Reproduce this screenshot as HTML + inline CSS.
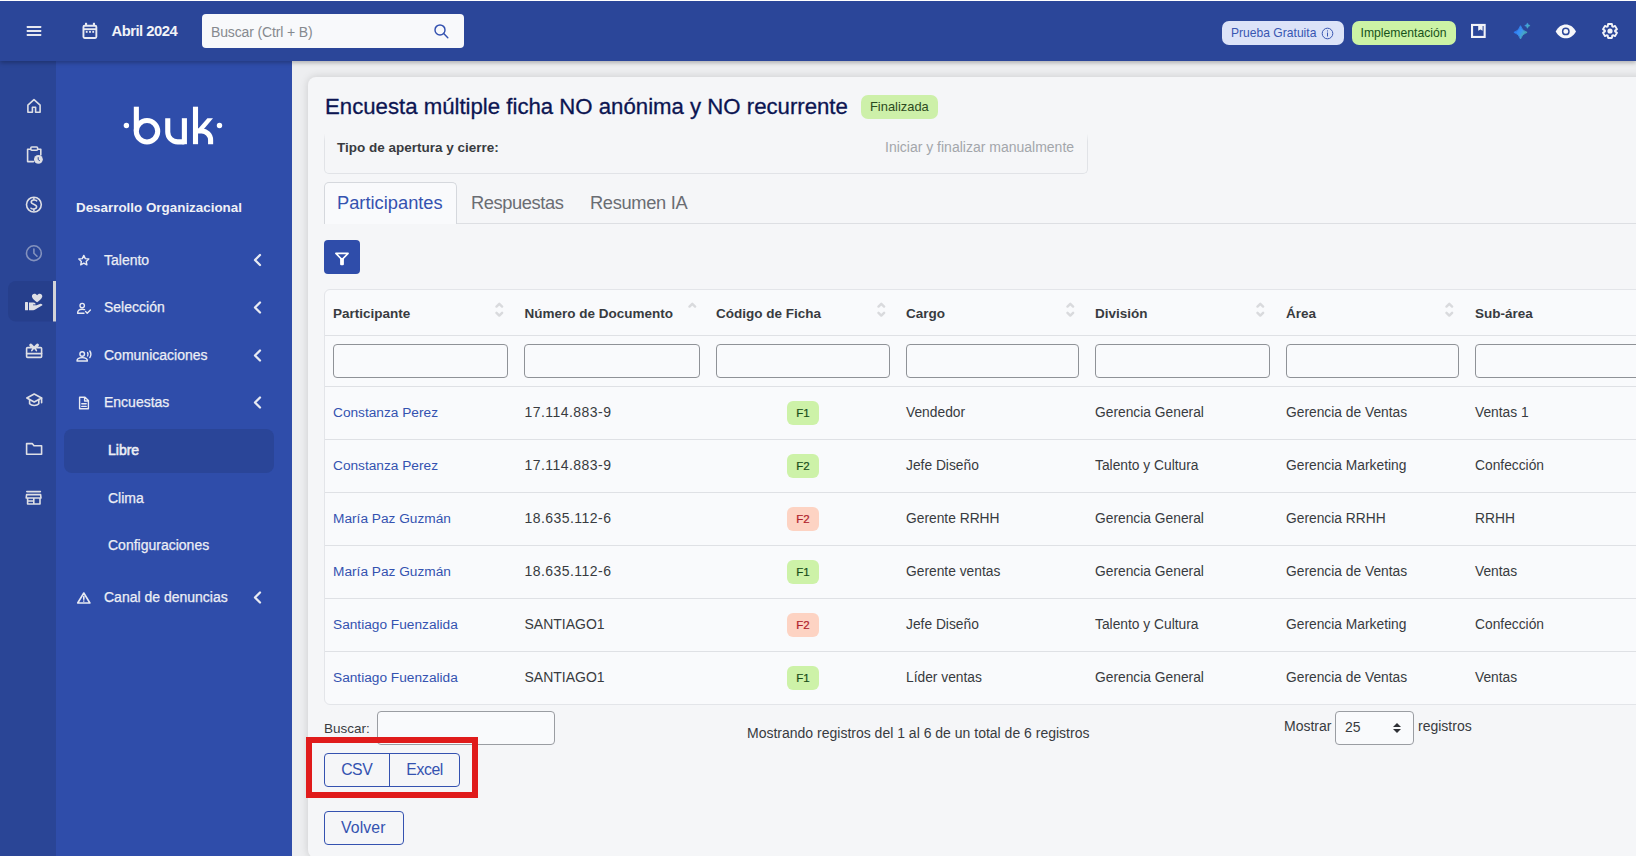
<!DOCTYPE html>
<html lang="es">
<head>
<meta charset="utf-8">
<title>Buk</title>
<style>
*{box-sizing:border-box;margin:0;padding:0}
html,body{width:1636px;height:856px;overflow:hidden;background:#EDEEF0;font-family:"Liberation Sans",sans-serif;color:#333}
.abs{position:absolute}
#top{position:absolute;left:0;top:0;width:1636px;height:61px;background:#2B4699;border-top:1px solid #FFFFFF;box-shadow:0 2px 4px rgba(0,0,0,.25);z-index:5}
#rail{position:absolute;left:0;top:61px;width:56px;height:795px;background:#2A4596}
#side{position:absolute;left:56px;top:61px;width:236px;height:795px;background:#2F4DAA}
#card{position:absolute;left:308px;top:77px;width:1360px;height:781px;background:#F5F6F8;border-radius:8px;box-shadow:0 0 8px rgba(0,0,0,.15)}
.txt{position:absolute;white-space:nowrap;line-height:1}
.ico{position:absolute}
.nav{position:absolute;left:104px;color:#ECEEF5;font-size:14px;white-space:nowrap;line-height:1;-webkit-text-stroke:0.25px #ECEEF5}
.sub{position:absolute;left:108px;color:#ECEEF5;font-size:14px;white-space:nowrap;line-height:1;-webkit-text-stroke:0.25px #ECEEF5}
.chev{position:absolute;left:252px}
.th{position:absolute;top:306px;font-size:14px;font-weight:bold;color:#333;white-space:nowrap;line-height:1}
.fin{position:absolute;top:344px;height:34px;border:1px solid #8F9297;border-radius:4px;background:#F9FAFC}
.rl{position:absolute;left:325px;width:1311px;height:1px;background:#DFE1E5}
.cell{position:absolute;font-size:14px;color:#333;white-space:nowrap;line-height:1}
.lnk{color:#3452B0}
.bdg{position:absolute;left:787px;width:32px;height:24px;border-radius:6px;font-size:11.5px;line-height:24px;text-align:center;-webkit-text-stroke:0.2px currentColor}
.g{background:#CDF2A8;color:#184D18}
.r{background:#FDD3C3;color:#B0222C}
</style>
</head>
<body>
<div id="top">
  <!-- hamburger -->
  <svg class="ico" style="left:26px;top:24px" width="16" height="12" viewBox="0 0 16 12"><g fill="#E6E8F0"><rect x="0.7" y="1.1" width="14.6" height="1.8" rx="0.4"/><rect x="0.7" y="5.1" width="14.6" height="1.8" rx="0.4"/><rect x="0.7" y="9.1" width="14.6" height="1.8" rx="0.4"/></g></svg>
  <!-- calendar -->
  <svg class="ico" style="left:76px;top:15px" width="28" height="28" viewBox="76 16 28 28"><g fill="none" stroke="#E8EAF2" stroke-width="1.9"><rect x="83.45" y="25.75" width="12.9" height="12.2" rx="1.2"/><line x1="83.45" y1="29.2" x2="96.35" y2="29.2"/></g><g fill="#E8EAF2"><rect x="85" y="22.8" width="2.1" height="3"/><rect x="92.9" y="22.8" width="2.1" height="3"/><rect x="85.8" y="30.9" width="1.8" height="1.9"/><rect x="89.1" y="30.9" width="1.8" height="1.9"/><rect x="92.3" y="30.9" width="1.8" height="1.9"/></g></svg>
  <div class="txt" style="left:111.5px;top:23.3px;font-size:14.8px;font-weight:bold;color:#F2F3F7;letter-spacing:-0.5px">Abril 2024</div>
  <div class="abs" style="left:202px;top:13px;width:262px;height:34px;background:#F8F9FB;border-radius:4px"></div>
  <div class="txt" style="left:211px;top:24.1px;font-size:14px;color:#86898E;letter-spacing:-0.14px">Buscar (Ctrl + B)</div>
  <svg class="ico" style="left:432.5px;top:22px" width="17" height="17" viewBox="0 0 17 17"><g fill="none" stroke="#3452B0" stroke-width="1.45" stroke-linecap="round"><circle cx="7" cy="6.9" r="5"/><line x1="10.7" y1="10.6" x2="14.8" y2="14.7"/></g></svg>
  <!-- pills -->
  <div class="abs" style="left:1222px;top:20px;width:122px;height:24px;background:#DCE3F8;border-radius:7px"></div>
  <div class="txt" style="left:1231px;top:25.9px;font-size:12.1px;color:#3856B1">Prueba Gratuita</div>
  <svg class="ico" style="left:1321px;top:26px" width="13" height="13" viewBox="0 0 13 13"><g fill="none" stroke="#3A57B2" stroke-width="1"><circle cx="6.5" cy="6.5" r="5.3"/></g><rect x="6" y="5.5" width="1" height="4" fill="#3A57B2"/><rect x="6" y="3.4" width="1" height="1.1" fill="#3A57B2"/></svg>
  <div class="abs" style="left:1352px;top:20px;width:104px;height:24px;background:#CCF3A5;border-radius:7px"></div>
  <div class="txt" style="left:1360.5px;top:25.9px;font-size:12.2px;color:#17521A">Implementación</div>
  <!-- book -->
  <svg class="ico" style="left:1466px;top:17px" width="26" height="26" viewBox="1466 18 26 26"><rect x="1472.05" y="24.95" width="12.6" height="12" fill="none" stroke="#F2F3F7" stroke-width="2.1"/><path d="M1478.2,25 H1482.6 V30.8 L1480.4,29.6 L1478.2,30.8 Z" fill="#F2F3F7"/></svg>
  <!-- sparkle -->
  <svg class="ico" style="left:1508px;top:17px" width="28" height="26" viewBox="1508 18 28 26"><defs><linearGradient id="sg" gradientUnits="userSpaceOnUse" x1="1514" y1="29" x2="1528" y2="37"><stop offset="0" stop-color="#2777FF"/><stop offset="0.45" stop-color="#3C93F0"/><stop offset="1" stop-color="#55C98A"/></linearGradient></defs><path d="M1520.5,25.7 Q1521.95,30.9 1527.1,32.35 Q1521.95,33.8 1520.5,39 Q1519.05,33.8 1513.9,32.35 Q1519.05,30.9 1520.5,25.7 Z" fill="url(#sg)" stroke="url(#sg)" stroke-width="0.8" stroke-linejoin="round"/><path d="M1527.4,22.9 Q1528,25 1530.1,25.6 Q1528,26.2 1527.4,28.3 Q1526.8,26.2 1524.7,25.6 Q1526.8,25 1527.4,22.9 Z" fill="url(#sg)" stroke="url(#sg)" stroke-width="0.5" stroke-linejoin="round"/></svg>
  <!-- eye -->
  <svg class="ico" style="left:1552px;top:17px" width="28" height="26" viewBox="1552 18 28 26"><path d="M1555.7,31.4 C1558.5,26.5 1562,24.5 1565.8,24.5 C1569.6,24.5 1573.1,26.5 1576,31.4 C1573.1,36.3 1569.6,38.25 1565.8,38.25 C1562,38.25 1558.5,36.3 1555.7,31.4 Z" fill="#F6F7FA"/><circle cx="1565.8" cy="31.4" r="3.18" fill="none" stroke="#2B4699" stroke-width="1.45"/></svg>
  <!-- gear -->
  <svg class="ico" style="left:1600.3px;top:20px" width="20" height="20" viewBox="0 0 20 20"><path fill="none" stroke="#F2F3F7" stroke-width="1.9" stroke-linejoin="round" d="M7.78,5.41 L8.08,3.06 L11.92,3.06 L12.22,5.41 L12.87,5.78 L15.05,4.87 L16.97,8.19 L15.09,9.62 L15.09,10.38 L16.97,11.81 L15.05,15.13 L12.87,14.22 L12.22,14.59 L11.92,16.94 L8.08,16.94 L7.78,14.59 L7.13,14.22 L4.95,15.13 L3.03,11.81 L4.91,10.38 L4.91,9.62 L3.03,8.19 L4.95,4.87 L7.13,5.78 Z"/><circle cx="10" cy="10" r="2.6" fill="#F2F3F7"/></svg>
</div>

<div id="rail">
  <svg class="ico" style="left:0;top:0" width="56" height="795" viewBox="0 61 56 795">
    <g fill="none" stroke="#DEDFE5" stroke-width="1.6" stroke-linejoin="round" stroke-linecap="round">
      <path d="M27.9,112.2 V105.2 L34,99.6 L40.1,105.2 V112.2 H35.6 V107.2 H32.4 V112.2 Z"/>
      <path d="M30.5,149.2 H27.6 V161.6 H33.5 M40.8,155 V149.2 H37.8"/>
      <rect x="30.8" y="147" width="6.8" height="3.2" rx="1"/>
      <circle cx="33.9" cy="204.6" r="7.4"/>
      <path d="M36.6,200.8 C35.6,199.6 31.2,199.6 31.2,202.2 C31.2,204.6 36.6,203.8 36.6,206.8 C36.6,209.4 32.2,209.4 31,208.2 M33.9,198.4 V199.8 M33.9,209.4 V210.8"/>
    </g>
    <circle cx="38.4" cy="159.3" r="4.4" fill="#DEDFE5"/>
    <path d="M38.2,157.2 V159.6 L39.8,160.8" fill="none" stroke="#2A4596" stroke-width="1"/>
    <g fill="none" stroke="#DEDFE5" stroke-opacity="0.5" stroke-width="1.6" stroke-linecap="round">
      <circle cx="33.9" cy="253.2" r="7.4"/>
      <path d="M33.9,249 V253.2 L37,256.2"/>
    </g>
    <path d="M8,289 a8,8 0 0 1 8,-8 H56 V321.5 H16 a8,8 0 0 1 -8,-8 Z" fill="#263F8C"/>
    <rect x="53" y="281" width="3" height="40.5" fill="#D3D4D9"/>
    <g fill="#DEDFE5">
      <path d="M37.1,302.3 C35,300.5 31.9,298.3 31.9,296.2 C31.9,294.6 33,293.7 34.4,293.7 C35.6,293.7 36.6,294.4 37.1,295.3 C37.6,294.4 38.6,293.7 39.8,293.7 C41.2,293.7 42.3,294.6 42.3,296.2 C42.3,298.3 39.2,300.5 37.1,302.3 Z"/>
      <rect x="25" y="302" width="3" height="8.3" rx="0.5"/>
      <path d="M29,302.6 H33.5 C34.8,302.6 35.6,303.4 35.6,304.4 H33 V305.2 H36.6 L40.5,303.8 C41.6,303.6 42.6,304.4 42.4,305.3 L35.2,309.6 C34.6,310 34,310.2 33.2,310.2 H29 Z"/>
    </g>
    <g fill="none" stroke="#DEDFE5" stroke-width="1.6" stroke-linejoin="round" stroke-linecap="round">
      <rect x="26.6" y="347.6" width="15" height="9.8" rx="1"/>
      <line x1="26.6" y1="353.6" x2="41.6" y2="353.6"/>
      <path d="M34.1,347.6 L31.3,344.6 C30.6,343.8 29.6,344.8 30.2,345.6 L32.4,347.6 M34.1,347.6 L36.9,344.6 C37.6,343.8 38.6,344.8 38,345.6 L35.8,347.6 M34.1,347.6 L31.8,350.6 M34.1,347.6 L36.4,350.6"/>
      <path d="M26.8,398 L34.2,394 L41.6,398 L34.2,402 Z"/>
      <path d="M29.6,399.6 V403.8 C31.6,406 36.8,406 38.8,403.8 V399.6 M41.6,398 V402.8"/>
      <path d="M26.6,454.2 V443.6 H32.2 L34,445.8 H41.6 V454.2 Z"/>
      <path d="M26.8,491.6 H40.4 M26.6,494.6 H40.6 L41,498 H26.2 Z M27.6,498 V504 H40 V498 M33.8,498 V504 M27.6,501 H33.8"/>
    </g>
  </svg>
</div>
<div id="side">
  <svg class="ico" style="left:0;top:0" width="236" height="795" viewBox="56 61 236 795">
    <g fill="#FFFFFF">
      <circle cx="126.4" cy="125.5" r="2.7"/>
      <circle cx="219.5" cy="125.5" r="2.7"/>
      <polygon points="207.4,118.2 213,118.2 201.6,131.8 195.6,131.8"/>
    </g>
    <g fill="none" stroke="#FFFFFF" stroke-width="5.1">
      <path d="M136.35,106.7 V131.2"/>
      <circle cx="147" cy="131.25" r="10.7"/>
      <path d="M167.75,118.2 V132 A9.85,9.85 0 0 0 177.6,141.85 H184.4"/>
      <path d="M184.4,118.2 V144.2"/>
      <path d="M195.5,106.7 V144.2"/>
      <path d="M195.5,131 H201.5 A9.1,9.1 0 0 1 210.6,140.1 V144.2"/>
    </g>
    <!-- nav icons -->
    <g fill="none" stroke="#E8EAF2" stroke-width="1.4" stroke-linejoin="round" stroke-linecap="round">
      <path d="M83.8,255.4 L85.3,258.6 L88.8,259 L86.2,261.4 L86.9,264.8 L83.8,263.1 L80.7,264.8 L81.4,261.4 L78.8,259 L82.3,258.6 Z"/>
      <circle cx="82.2" cy="305.6" r="2.2"/>
      <path d="M77.6,313.2 C77.6,310.4 79.6,309.2 82.2,309.2 C83.2,309.2 84,309.4 84.6,309.6 M77.6,313.2 H84 M85.6,311.6 L87.2,313.2 L90.4,310"/>
      <circle cx="82.2" cy="354" r="2.3"/>
      <path d="M77,361 C77,358.6 79,357.6 82.2,357.6 C85.4,357.6 87.4,358.6 87.4,361 Z M87.6,352.6 C88.2,353.6 88.2,355 87.6,356 M89.8,351 C91,352.8 91,355.8 89.8,357.6"/>
      <path d="M79.6,397.2 H85 L88.4,400.6 V408.8 H79.6 Z M84.6,397.4 V401 H88.2 M81.8,403.8 H86.2 M81.8,406.4 H86.2"/>
      <path d="M83.8,593 L89.9,603 H77.7 Z M83.8,596.6 V599.2 M83.8,601 V601.1" stroke-width="1.6"/>
    </g>
    <g fill="none" stroke="#E8EAF2" stroke-width="2.3" stroke-linecap="round" stroke-linejoin="round">
      <path d="M260,255 L255,260 L260,265"/>
      <path d="M260,302.5 L255,307.5 L260,312.5"/>
      <path d="M260,350.5 L255,355.5 L260,360.5"/>
      <path d="M260,397.5 L255,402.5 L260,407.5"/>
      <path d="M260,592.5 L255,597.5 L260,602.5"/>
    </g>
    <rect x="64" y="429" width="210" height="44" rx="8" fill="#2A4598"/>
  </svg>
  <div class="txt" style="left:20px;top:140px;font-size:13.4px;font-weight:bold;color:#EFF1F6">Desarrollo Organizacional</div>
  <div class="nav" style="left:48px;top:192px">Talento</div>
  <div class="nav" style="left:48px;top:239px">Selección</div>
  <div class="nav" style="left:48px;top:287px">Comunicaciones</div>
  <div class="nav" style="left:48px;top:334px">Encuestas</div>
  <div class="sub" style="left:52px;top:382px;-webkit-text-stroke:0.55px #ECEEF5">Libre</div>
  <div class="sub" style="left:52px;top:430px">Clima</div>
  <div class="sub" style="left:52px;top:477px">Configuraciones</div>
  <div class="nav" style="left:48px;top:529px">Canal de denuncias</div>
</div>
<div id="card"></div>
<div id="content">
<div class="txt" style="left:325px;top:96.00px;font-size:22.2px;color:#0C1552;-webkit-text-stroke:0.3px #0C1552">Encuesta múltiple ficha NO anónima y NO recurrente</div>
<div class="abs" style="left:861px;top:95px;width:77px;height:24px;background:#CDF0A9;border-radius:7px"></div>
<div class="txt" style="left:870px;top:101.00px;font-size:12.9px;color:#2C4A22;">Finalizada</div>
<div class="abs" style="left:324px;top:131px;width:764px;height:43px;border:1px solid #E1E3E7;border-top:none;border-radius:0 0 5px 5px"></div>
<div class="abs" style="left:320px;top:126px;width:780px;height:15px;background:linear-gradient(#F5F6F8 50%,rgba(245,246,248,0))"></div>
<div class="txt" style="left:337px;top:141.00px;font-size:13.5px;font-weight:bold;color:#383B40;">Tipo de apertura y cierre:</div>
<div class="txt" style="left:885px;top:140.00px;font-size:14px;color:#A3A6AB;">Iniciar y finalizar manualmente</div>
<div class="abs" style="left:456px;top:223px;width:1180px;height:1px;background:#DDDFE3"></div>
<div class="abs" style="left:324px;top:182px;width:133px;height:42px;background:#F9FAFC;border:1px solid #D5D8DD;border-bottom:none;border-radius:5px 5px 0 0"></div>
<div class="txt" style="left:337px;top:194.00px;font-size:18.3px;color:#3452B0;">Participantes</div>
<div class="txt" style="left:471px;top:194.00px;font-size:18.3px;color:#6A6D73;letter-spacing:-0.4px">Respuestas</div>
<div class="txt" style="left:590px;top:194.00px;font-size:18.3px;color:#6A6D73;letter-spacing:-0.33px">Resumen IA</div>
<div class="abs" style="left:324px;top:240px;width:36px;height:34px;background:#2F4DAA;border-radius:4px"></div>
<svg class="ico" style="left:328px;top:244px" width="28" height="28" viewBox="328 244 28 28"><path d="M335.9,253.4 H348.1 L342,259.6 Z" fill="none" stroke="#FFFFFF" stroke-width="1.6" stroke-linejoin="round"/><path d="M340.1,258.6 H343.9 V264.3 A1,1 0 0 1 342.9,265.3 H341.1 A1,1 0 0 1 340.1,264.3 Z" fill="#FFFFFF"/></svg>
<div class="abs" style="left:324px;top:289px;width:1340px;height:416px;background:#F9FAFC;border:1px solid #E3E5E9;border-radius:6px"></div>
<div class="txt" style="left:333px;top:307.00px;font-size:13.5px;font-weight:bold;color:#383B40;">Participante</div>
<div class="txt" style="left:524.5px;top:307.00px;font-size:13.5px;font-weight:bold;color:#383B40;">Número de Documento</div>
<div class="txt" style="left:716px;top:307.00px;font-size:13.5px;font-weight:bold;color:#383B40;">Código de Ficha</div>
<div class="txt" style="left:906px;top:307.00px;font-size:13.5px;font-weight:bold;color:#383B40;">Cargo</div>
<div class="txt" style="left:1095px;top:307.00px;font-size:13.5px;font-weight:bold;color:#383B40;">División</div>
<div class="txt" style="left:1286px;top:307.00px;font-size:13.5px;font-weight:bold;color:#383B40;">Área</div>
<div class="txt" style="left:1475px;top:307.00px;font-size:13.5px;font-weight:bold;color:#383B40;">Sub-área</div>
<div class="fin" style="left:333px;width:175px"></div>
<div class="fin" style="left:524px;width:176px"></div>
<div class="fin" style="left:716px;width:174px"></div>
<div class="fin" style="left:906px;width:173px"></div>
<div class="fin" style="left:1095px;width:175px"></div>
<div class="fin" style="left:1286px;width:173px"></div>
<div class="fin" style="left:1475px;width:205px"></div>
<svg class="ico" style="left:495px;top:302px" width="9" height="16" viewBox="0 0 9 16"><g fill="none" stroke="#D9DADD" stroke-width="2.4" stroke-linecap="round" stroke-linejoin="round"><path d="M1.5,4.6 L4.3,1.8 L7.1,4.6"/><path d="M1.5,10.8 L4.3,13.6 L7.1,10.8"/></g></svg>
<svg class="ico" style="left:876.5px;top:302px" width="9" height="16" viewBox="0 0 9 16"><g fill="none" stroke="#D9DADD" stroke-width="2.4" stroke-linecap="round" stroke-linejoin="round"><path d="M1.5,4.6 L4.3,1.8 L7.1,4.6"/><path d="M1.5,10.8 L4.3,13.6 L7.1,10.8"/></g></svg>
<svg class="ico" style="left:1066px;top:302px" width="9" height="16" viewBox="0 0 9 16"><g fill="none" stroke="#D9DADD" stroke-width="2.4" stroke-linecap="round" stroke-linejoin="round"><path d="M1.5,4.6 L4.3,1.8 L7.1,4.6"/><path d="M1.5,10.8 L4.3,13.6 L7.1,10.8"/></g></svg>
<svg class="ico" style="left:1256px;top:302px" width="9" height="16" viewBox="0 0 9 16"><g fill="none" stroke="#D9DADD" stroke-width="2.4" stroke-linecap="round" stroke-linejoin="round"><path d="M1.5,4.6 L4.3,1.8 L7.1,4.6"/><path d="M1.5,10.8 L4.3,13.6 L7.1,10.8"/></g></svg>
<svg class="ico" style="left:1445px;top:302px" width="9" height="16" viewBox="0 0 9 16"><g fill="none" stroke="#D9DADD" stroke-width="2.4" stroke-linecap="round" stroke-linejoin="round"><path d="M1.5,4.6 L4.3,1.8 L7.1,4.6"/><path d="M1.5,10.8 L4.3,13.6 L7.1,10.8"/></g></svg>
<svg class="ico" style="left:688px;top:302px" width="9" height="16" viewBox="0 0 9 16"><g fill="none" stroke="#D9DADD" stroke-width="2.4" stroke-linecap="round" stroke-linejoin="round"><path d="M1.5,4.6 L4.3,1.8 L7.1,4.6"/></g></svg>
<div class="rl" style="top:335px"></div>
<div class="rl" style="top:386px"></div>
<div class="rl" style="top:439px"></div>
<div class="rl" style="top:492px"></div>
<div class="rl" style="top:545px"></div>
<div class="rl" style="top:598px"></div>
<div class="rl" style="top:651px"></div>
<div class="txt" style="left:333px;top:406.00px;font-size:13.7px;color:#3452B0;">Constanza Perez</div>
<div class="txt" style="left:524.5px;top:405.00px;font-size:14px;color:#383B40;letter-spacing:0.45px">17.114.883-9</div>
<div class="bdg g" style="top:401px">F1</div>
<div class="txt" style="left:906px;top:406.00px;font-size:13.8px;color:#383B40;">Vendedor</div>
<div class="txt" style="left:1095px;top:406.00px;font-size:13.8px;color:#383B40;">Gerencia General</div>
<div class="txt" style="left:1286px;top:406.00px;font-size:13.8px;color:#383B40;">Gerencia de Ventas</div>
<div class="txt" style="left:1475px;top:406.00px;font-size:13.8px;color:#383B40;">Ventas 1</div>
<div class="txt" style="left:333px;top:459.00px;font-size:13.7px;color:#3452B0;">Constanza Perez</div>
<div class="txt" style="left:524.5px;top:458.00px;font-size:14px;color:#383B40;letter-spacing:0.45px">17.114.883-9</div>
<div class="bdg g" style="top:454px">F2</div>
<div class="txt" style="left:906px;top:459.00px;font-size:13.8px;color:#383B40;">Jefe Diseño</div>
<div class="txt" style="left:1095px;top:459.00px;font-size:13.8px;color:#383B40;">Talento y Cultura</div>
<div class="txt" style="left:1286px;top:459.00px;font-size:13.8px;color:#383B40;">Gerencia Marketing</div>
<div class="txt" style="left:1475px;top:459.00px;font-size:13.8px;color:#383B40;">Confección</div>
<div class="txt" style="left:333px;top:512.00px;font-size:13.7px;color:#3452B0;">María Paz Guzmán</div>
<div class="txt" style="left:524.5px;top:511.00px;font-size:14px;color:#383B40;letter-spacing:0.45px">18.635.112-6</div>
<div class="bdg r" style="top:507px">F2</div>
<div class="txt" style="left:906px;top:512.00px;font-size:13.8px;color:#383B40;">Gerente RRHH</div>
<div class="txt" style="left:1095px;top:512.00px;font-size:13.8px;color:#383B40;">Gerencia General</div>
<div class="txt" style="left:1286px;top:512.00px;font-size:13.8px;color:#383B40;">Gerencia RRHH</div>
<div class="txt" style="left:1475px;top:512.00px;font-size:13.8px;color:#383B40;">RRHH</div>
<div class="txt" style="left:333px;top:565.00px;font-size:13.7px;color:#3452B0;">María Paz Guzmán</div>
<div class="txt" style="left:524.5px;top:564.00px;font-size:14px;color:#383B40;letter-spacing:0.45px">18.635.112-6</div>
<div class="bdg g" style="top:560px">F1</div>
<div class="txt" style="left:906px;top:565.00px;font-size:13.8px;color:#383B40;">Gerente ventas</div>
<div class="txt" style="left:1095px;top:565.00px;font-size:13.8px;color:#383B40;">Gerencia General</div>
<div class="txt" style="left:1286px;top:565.00px;font-size:13.8px;color:#383B40;">Gerencia de Ventas</div>
<div class="txt" style="left:1475px;top:565.00px;font-size:13.8px;color:#383B40;">Ventas</div>
<div class="txt" style="left:333px;top:618.00px;font-size:13.7px;color:#3452B0;">Santiago Fuenzalida</div>
<div class="txt" style="left:524.5px;top:617.00px;font-size:14px;color:#383B40;">SANTIAGO1</div>
<div class="bdg r" style="top:613px">F2</div>
<div class="txt" style="left:906px;top:618.00px;font-size:13.8px;color:#383B40;">Jefe Diseño</div>
<div class="txt" style="left:1095px;top:618.00px;font-size:13.8px;color:#383B40;">Talento y Cultura</div>
<div class="txt" style="left:1286px;top:618.00px;font-size:13.8px;color:#383B40;">Gerencia Marketing</div>
<div class="txt" style="left:1475px;top:618.00px;font-size:13.8px;color:#383B40;">Confección</div>
<div class="txt" style="left:333px;top:671.00px;font-size:13.7px;color:#3452B0;">Santiago Fuenzalida</div>
<div class="txt" style="left:524.5px;top:670.00px;font-size:14px;color:#383B40;">SANTIAGO1</div>
<div class="bdg g" style="top:666px">F1</div>
<div class="txt" style="left:906px;top:671.00px;font-size:13.8px;color:#383B40;">Líder ventas</div>
<div class="txt" style="left:1095px;top:671.00px;font-size:13.8px;color:#383B40;">Gerencia General</div>
<div class="txt" style="left:1286px;top:671.00px;font-size:13.8px;color:#383B40;">Gerencia de Ventas</div>
<div class="txt" style="left:1475px;top:671.00px;font-size:13.8px;color:#383B40;">Ventas</div>
<div class="txt" style="left:324px;top:722.00px;font-size:13.5px;color:#383B40;">Buscar:</div>
<div class="abs" style="left:377px;top:711px;width:178px;height:34px;border:1px solid #9A9DA2;border-radius:4px;background:#F9FAFC"></div>
<div class="txt" style="left:747px;top:726.00px;font-size:14px;color:#383B40;">Mostrando registros del 1 al 6 de un total de 6 registros</div>
<div class="txt" style="left:1284px;top:719.00px;font-size:14px;color:#383B40;">Mostrar</div>
<div class="abs" style="left:1335px;top:711px;width:79px;height:34px;border:1px solid #9A9DA2;border-radius:4px;background:#F9FAFC"></div>
<div class="txt" style="left:1345px;top:720.00px;font-size:14px;color:#383B40;">25</div>
<svg class="ico" style="left:1392px;top:722px" width="10" height="12" viewBox="0 0 10 12"><path d="M1,5 L5,1 L9,5 Z M1,7 L5,11 L9,7 Z" fill="#2E3035"/></svg>
<div class="txt" style="left:1418px;top:719.00px;font-size:14px;color:#383B40;">registros</div>
<div class="abs" style="left:306px;top:737px;width:172px;height:61px;border:6px solid #E01B1B"></div>
<div class="abs" style="left:324px;top:753px;width:136px;height:34px;border:1px solid #3452B0;border-radius:4px"></div>
<div class="abs" style="left:389px;top:753px;width:1px;height:34px;background:#3452B0"></div>
<div class="txt" style="left:341.2px;top:762.00px;font-size:15.8px;color:#3452B0;letter-spacing:-0.5px">CSV</div>
<div class="txt" style="left:406.3px;top:762.00px;font-size:15.8px;color:#3452B0;letter-spacing:-0.4px">Excel</div>
<div class="abs" style="left:324px;top:811px;width:80px;height:34px;border:1px solid #3452B0;border-radius:4px"></div>
<div class="txt" style="left:341px;top:820.00px;font-size:15.8px;color:#3452B0;letter-spacing:0.1px">Volver</div>
</div>

</body>
</html>
